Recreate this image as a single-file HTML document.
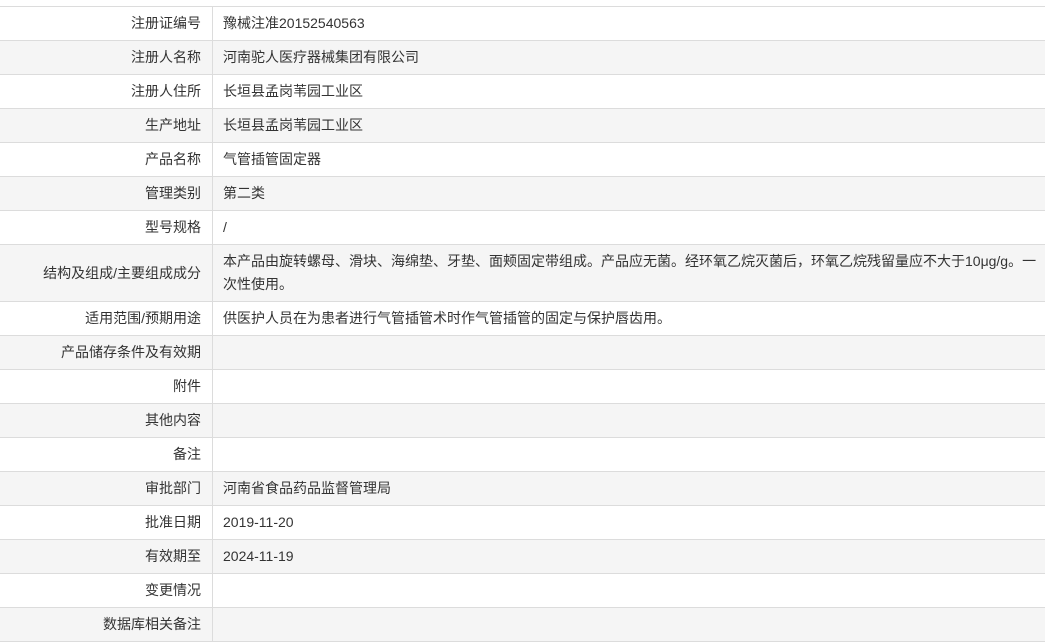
<!DOCTYPE html>
<html><head><meta charset="utf-8"><style>
body{margin:0;background:#fff;font-family:"Liberation Sans","Noto Sans CJK SC",sans-serif;font-size:14px;color:#333;}
table{position:absolute;top:6px;left:0;width:1045px;border-collapse:collapse;}
td{border-top:1px solid #dcdcdc;border-bottom:1px solid #dcdcdc;height:33px;padding:0 10px;line-height:23px;}
td.l{width:191px;text-align:right;border-right:1px solid #dcdcdc;padding-right:11px;}
tr:nth-child(even) td{background:#f5f5f5;}
tr.tall td{height:56px;}
</style></head><body>
<table>
<tr><td class="l">注册证编号</td><td>豫械注准20152540563</td></tr>
<tr><td class="l">注册人名称</td><td>河南驼人医疗器械集团有限公司</td></tr>
<tr><td class="l">注册人住所</td><td>长垣县孟岗苇园工业区</td></tr>
<tr><td class="l">生产地址</td><td>长垣县孟岗苇园工业区</td></tr>
<tr><td class="l">产品名称</td><td>气管插管固定器</td></tr>
<tr><td class="l">管理类别</td><td>第二类</td></tr>
<tr><td class="l">型号规格</td><td>/</td></tr>
<tr class="tall"><td class="l">结构及组成/主要组成成分</td><td style="padding-right:0">本产品由旋转螺母、滑块、海绵垫、牙垫、面颊固定带组成。产品应无菌。经环氧乙烷灭菌后，环氧乙烷残留量应不大于10μg/g。一<br>次性使用。</td></tr>
<tr><td class="l">适用范围/预期用途</td><td>供医护人员在为患者进行气管插管术时作气管插管的固定与保护唇齿用。</td></tr>
<tr><td class="l">产品储存条件及有效期</td><td></td></tr>
<tr><td class="l">附件</td><td></td></tr>
<tr><td class="l">其他内容</td><td></td></tr>
<tr><td class="l">备注</td><td></td></tr>
<tr><td class="l">审批部门</td><td>河南省食品药品监督管理局</td></tr>
<tr><td class="l">批准日期</td><td>2019-11-20</td></tr>
<tr><td class="l">有效期至</td><td>2024-11-19</td></tr>
<tr><td class="l">变更情况</td><td></td></tr>
<tr><td class="l">数据库相关备注</td><td></td></tr>
</table>
</body></html>
